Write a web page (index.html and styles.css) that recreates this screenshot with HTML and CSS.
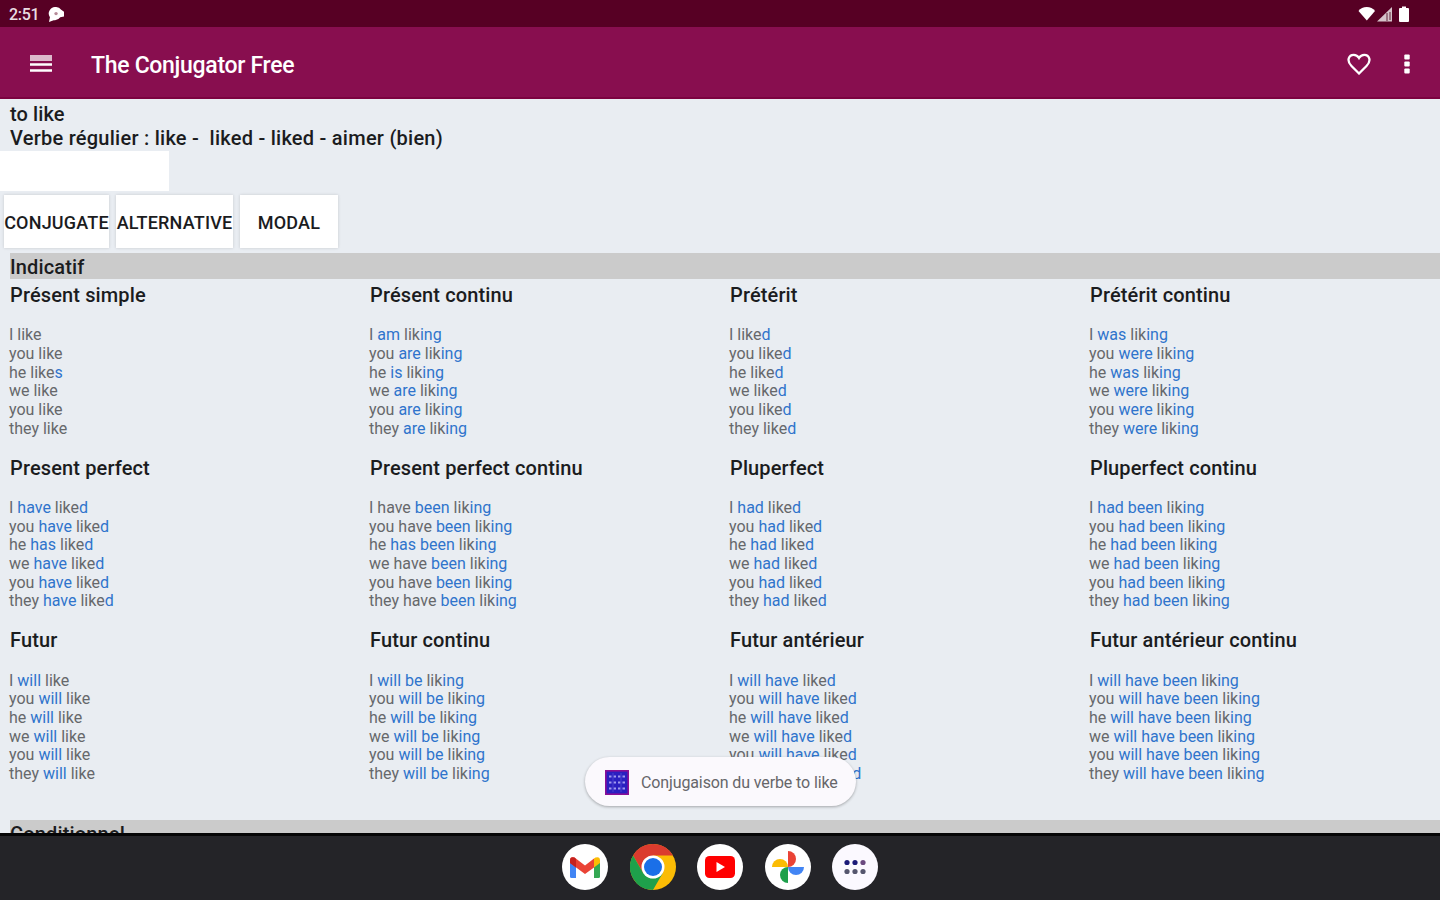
FILE: index.html
```html
<!DOCTYPE html>
<html lang="fr">
<head>
  <meta charset="UTF-8">
  <title>The Conjugator Free</title>
  <link rel="stylesheet" href="styles.css">
</head>
<body>

<div class="status-bar">
  <span class="clock">2:51</span>
  <svg class="notif" width="17" height="15" viewBox="0 0 18 16"><path d="M8 0a7 7 0 0 1 6 3l3 2v5l-4 1a7 7 0 0 1-7 3l-5 2 1-5A7 7 0 0 1 8 0z" fill="#fff"/><circle cx="8.500" cy="7" r="1.800" fill="#b58a98"/></svg>
  <svg class="signals" width="54" height="18" viewBox="0 0 54 18">
    <path d="M1.500 6C5 .8 14.500.8 18 6l-8.200 9.500z" fill="#fff"/>
    <path d="M20 16.500 35 2v14.500z" fill="#d5c3ca"/><path d="M30 8v8M33 7v8" stroke="#7b4a5a" stroke-width="1.300"/>
    <path d="M43 3h2V1.500h4V3h2q1 0 1 1v12q0 1-1 1h-8q-1 0-1-1V4q0-1 1-1z" fill="#fff"/>
  </svg>
</div>

<div class="app-bar">
  <svg class="menu" width="22" height="18" viewBox="0 0 22 18"><path d="M0 0h22v6H0z" fill="#dcb8cb"/><path d="M0 9.500h22M0 15.500h22" stroke="#fff" stroke-width="2.400"/></svg>
  <span class="app-title">The Conjugator Free</span>
  <svg class="heart" width="24" height="22" viewBox="0 0 24 22"><path d="M12 20.500 4.500 13C-1 7.500 2 1.800 6.700 1.800c2.300 0 4.100 1.200 5.300 3.200 1.200-2 3-3.200 5.300-3.200C22 1.800 25 7.500 19.500 13z" fill="none" stroke="#fff" stroke-width="2.300"/></svg>
  <svg class="more" width="6" height="20" viewBox="0 0 6 20"><g fill="#fff"><rect x=".3" y=".5" width="5.400" height="5" rx="1"/><rect x=".3" y="7.500" width="5.400" height="5" rx="1"/><rect x=".3" y="14.500" width="5.400" height="5" rx="1"/></g></svg>
</div>

<div class="content">
  <div class="verb">
    <div>to like</div>
    <div class="forms">Verbe régulier : like - &nbsp;liked - liked - aimer (bien)</div>
  </div>
  <div class="verb-input"></div>
  <div class="buttons">
    <div class="btn conjugate">CONJUGATE</div>
    <div class="btn alternative">ALTERNATIVE</div>
    <div class="btn modal">MODAL</div>
  </div>

  <div class="mode">Indicatif</div>
  <div class="tenses">
    <div class="tense">
      <h2>Présent simple</h2>
      <p>I like<br>you like<br>he like<b>s</b><br>we like<br>you like<br>they like</p>
    </div>
    <div class="tense">
      <h2>Présent continu</h2>
      <p>I <b>am</b> lik<b>ing</b><br>you <b>are</b> lik<b>ing</b><br>he <b>is</b> lik<b>ing</b><br>we <b>are</b> lik<b>ing</b><br>you <b>are</b> lik<b>ing</b><br>they <b>are</b> lik<b>ing</b></p>
    </div>
    <div class="tense">
      <h2>Prétérit</h2>
      <p>I like<b>d</b><br>you like<b>d</b><br>he like<b>d</b><br>we like<b>d</b><br>you like<b>d</b><br>they like<b>d</b></p>
    </div>
    <div class="tense">
      <h2>Prétérit continu</h2>
      <p>I <b>was</b> lik<b>ing</b><br>you <b>were</b> lik<b>ing</b><br>he <b>was</b> lik<b>ing</b><br>we <b>were</b> lik<b>ing</b><br>you <b>were</b> lik<b>ing</b><br>they <b>were</b> lik<b>ing</b></p>
    </div>

    <div class="tense">
      <h2>Present perfect</h2>
      <p>I <b>have</b> like<b>d</b><br>you <b>have</b> like<b>d</b><br>he <b>has</b> like<b>d</b><br>we <b>have</b> like<b>d</b><br>you <b>have</b> like<b>d</b><br>they <b>have</b> like<b>d</b></p>
    </div>
    <div class="tense">
      <h2>Present perfect continu</h2>
      <p>I have <b>been</b> lik<b>ing</b><br>you have <b>been</b> lik<b>ing</b><br>he <b>has been</b> lik<b>ing</b><br>we have <b>been</b> lik<b>ing</b><br>you have <b>been</b> lik<b>ing</b><br>they have <b>been</b> lik<b>ing</b></p>
    </div>
    <div class="tense">
      <h2>Pluperfect</h2>
      <p>I <b>had</b> like<b>d</b><br>you <b>had</b> like<b>d</b><br>he <b>had</b> like<b>d</b><br>we <b>had</b> like<b>d</b><br>you <b>had</b> like<b>d</b><br>they <b>had</b> like<b>d</b></p>
    </div>
    <div class="tense">
      <h2>Pluperfect continu</h2>
      <p>I <b>had been</b> lik<b>ing</b><br>you <b>had been</b> lik<b>ing</b><br>he <b>had been</b> lik<b>ing</b><br>we <b>had been</b> lik<b>ing</b><br>you <b>had been</b> lik<b>ing</b><br>they <b>had been</b> lik<b>ing</b></p>
    </div>

    <div class="tense">
      <h2>Futur</h2>
      <p>I <b>will</b> like<br>you <b>will</b> like<br>he <b>will</b> like<br>we <b>will</b> like<br>you <b>will</b> like<br>they <b>will</b> like</p>
    </div>
    <div class="tense">
      <h2>Futur continu</h2>
      <p>I <b>will be</b> lik<b>ing</b><br>you <b>will be</b> lik<b>ing</b><br>he <b>will be</b> lik<b>ing</b><br>we <b>will be</b> lik<b>ing</b><br>you <b>will be</b> lik<b>ing</b><br>they <b>will be</b> lik<b>ing</b></p>
    </div>
    <div class="tense">
      <h2>Futur antérieur</h2>
      <p>I <b>will have</b> like<b>d</b><br>you <b>will have</b> like<b>d</b><br>he <b>will have</b> like<b>d</b><br>we <b>will have</b> like<b>d</b><br>you <b>will have</b> like<b>d</b><br>they <b>will have</b> like<b>d</b></p>
    </div>
    <div class="tense">
      <h2>Futur antérieur continu</h2>
      <p>I <b>will have been</b> lik<b>ing</b><br>you <b>will have been</b> lik<b>ing</b><br>he <b>will have been</b> lik<b>ing</b><br>we <b>will have been</b> lik<b>ing</b><br>you <b>will have been</b> lik<b>ing</b><br>they <b>will have been</b> lik<b>ing</b></p>
    </div>
  </div>
  <div class="mode">Conditionnel</div>
</div>

<div class="toast">
  <svg width="24" height="25" viewBox="0 0 24 25"><rect x=".8" y=".8" width="22.400" height="23.400" fill="#2a1fc0" stroke="#8a0f96" stroke-width="1.600"/><path d="M4 6.500h16M4 12.500h16M4 18.500h16" stroke="#a09aef" stroke-width="2.200" stroke-dasharray="2.500 2"/><path d="M8 3v19M16 3v19" stroke="#4a42d0" stroke-width="1"/></svg>
  <span>Conjugaison du verbe to like</span>
</div>

<div class="taskbar">
  <svg width="46" height="46" viewBox="0 0 46 46">
    <circle cx="23" cy="23" r="23" fill="#fff"/>
    <path d="M8 16v16.500q0 1.500 1.500 1.500H14V20z" fill="#4285f4"/>
    <path d="M38 16v16.500q0 1.500-1.500 1.500H32V20z" fill="#34a853"/>
    <path d="M8 19v-2.500q0-4.500 4.500-3L23 21.500l9-7v9L23 30z" fill="#ea4335"/>
    <path d="M32 14.500l1.500-1q4.500-1.500 4.500 3V19l-6 4.500z" fill="#fbbc04"/>
    <path d="M8 19v-2.500q0-4.500 4.500-3l1.500 1.500v8.500z" fill="#c5221f"/>
  </svg>
  <svg width="46" height="46" viewBox="0 0 46 46">
    <circle cx="23" cy="23" r="23" fill="#fbbc05"/>
    <path d="M3.080 11.500A23 23 0 0 1 42.920 11.500H23L13 28.800z" fill="#db3b2e"/>
    <path d="M3.080 11.500A23 23 0 0 0 23 46L32.960 28.750 23 34.500 13.040 28.750z" fill="#1ea04b"/>
    <circle cx="23" cy="23" r="11.500" fill="#fff"/>
    <circle cx="23" cy="23" r="9" fill="#1a6fe8"/>
  </svg>
  <svg width="46" height="46" viewBox="0 0 46 46">
    <circle cx="23" cy="23" r="23" fill="#fff"/>
    <rect x="8" y="12" width="30" height="22" rx="4.500" fill="#f00"/>
    <path d="M19.500 18v10l8.500-5z" fill="#fff"/>
  </svg>
  <svg width="46" height="46" viewBox="0 0 46 46">
    <circle cx="23" cy="23" r="23" fill="#fff"/>
    <path d="M23 23V7a8 8 0 0 1 0 16z" fill="#ea4335"/>
    <path d="M23 23h16a8 8 0 0 1-16 0z" fill="#4285f4"/>
    <path d="M23 23v16a8 8 0 0 1 0-16z" fill="#1ea04b"/>
    <path d="M23 23H7a8 8 0 0 1 16 0z" fill="#fbbc04"/>
  </svg>
  <svg width="46" height="46" viewBox="0 0 46 46">
    <circle cx="23" cy="23" r="23" fill="#fbf9ff"/>
    <g fill="#1b1a78"><circle cx="15" cy="18.500" r="2.600"/><circle cx="23" cy="18.500" r="2.600"/></g>
    <circle cx="31" cy="18.500" r="2.600" fill="#6b4a80"/>
    <g fill="#55566e"><circle cx="15" cy="27.500" r="2.600"/><circle cx="23" cy="27.500" r="2.600"/><circle cx="31" cy="27.500" r="2.600"/></g>
  </svg>
</div>

</body>
</html>
```

FILE: styles.css
```css
* {
  box-sizing: border-box;
}

body {
  margin: 0;
  height: 900px;
  display: flex;
  flex-direction: column;
  overflow: hidden;
  font-family: Roboto, sans-serif;
  background-color: #e9edf2;
}

.status-bar {
  height: 27px;
  flex: none;
  display: flex;
  align-items: center;
  padding: 1px 29px 0 9px;
  background-color: #570024;
  color: #eadde2;
}

.clock {
  width: 39px;
  font-size: 16px;
  font-weight: 500;
  letter-spacing: -0.3px;
}

.signals {
  margin-left: auto;
}

.app-bar {
  height: 72px;
  flex: none;
  display: flex;
  align-items: center;
  padding: 3px 30px 0;
  background-color: #880e4f;
  border-bottom: 2px solid #7b0340;
}

.app-title {
  margin-left: 39px;
  padding-top: 3px;
  font-size: 23px;
  font-weight: 500;
  letter-spacing: -0.3px;
  color: #fff;
}

.heart {
  margin-left: auto;
}

.more {
  margin-left: 33px;
}

.content {
  flex: 1;
  min-height: 0;
  overflow: hidden;
}

.verb {
  padding: 4px 10px 0;
  height: 52px;
  font-size: 20px;
  font-weight: 500;
  line-height: 23.5px;
  letter-spacing: 0.1px;
  color: #1b1c1e;
}

.forms {
  letter-spacing: 0.25px;
}

.verb-input {
  width: 169px;
  height: 40px;
  background-color: #fff;
}

.buttons {
  display: flex;
  gap: 7px;
  padding: 4px 4px 5px;
}

.btn {
  height: 53px;
  padding-top: 2px;
  display: flex;
  align-items: center;
  justify-content: center;
  background-color: #fff;
  box-shadow: 0 0 3px rgba(0, 0, 0, 0.15);
  font-size: 18px;
  font-weight: 500;
  letter-spacing: 0.2px;
  white-space: nowrap;
  color: #1b1c1e;
}

.conjugate {
  width: 105px;
}

.alternative {
  width: 117px;
}

.modal {
  width: 98px;
}

.mode {
  margin-left: 10px;
  height: 26px;
  background-color: #cbcbcb;
  font-size: 20px;
  font-weight: 500;
  line-height: 28px;
  letter-spacing: 0.15px;
  color: #1b1c1e;
}

.tenses {
  display: grid;
  grid-template-columns: repeat(4, 360px);
  padding: 5px 0 18px 10px;
}

.tense {
  height: 172.670px;
}

.tense h2 {
  margin: 0 0 19px;
  font-size: 20px;
  font-weight: 500;
  line-height: 23.400px;
  letter-spacing: 0.13px;
  color: #1b1c1e;
}

.tense p {
  margin: 0 0 0 -1px;
  font-size: 16px;
  line-height: 18.670px;
  color: #66686b;
}

.tense b {
  font-weight: 400;
  color: #2f74cc;
}

.toast {
  position: absolute;
  left: 585px;
  top: 757px;
  width: 271px;
  height: 49px;
  display: flex;
  align-items: center;
  gap: 12px;
  padding: 1px 0 0 20px;
  border-radius: 25px;
  background-color: #fbf9fd;
  box-shadow: 0 1px 3px rgba(0, 0, 0, 0.3);
  font-size: 16px;
  letter-spacing: -0.12px;
  white-space: nowrap;
  color: #66666a;
}

.taskbar {
  height: 67px;
  flex: none;
  display: flex;
  justify-content: center;
  align-items: center;
  gap: 21.500px;
  padding-bottom: 2px;
  background-color: #242428;
  border-top: 3px solid #050506;
}
```
